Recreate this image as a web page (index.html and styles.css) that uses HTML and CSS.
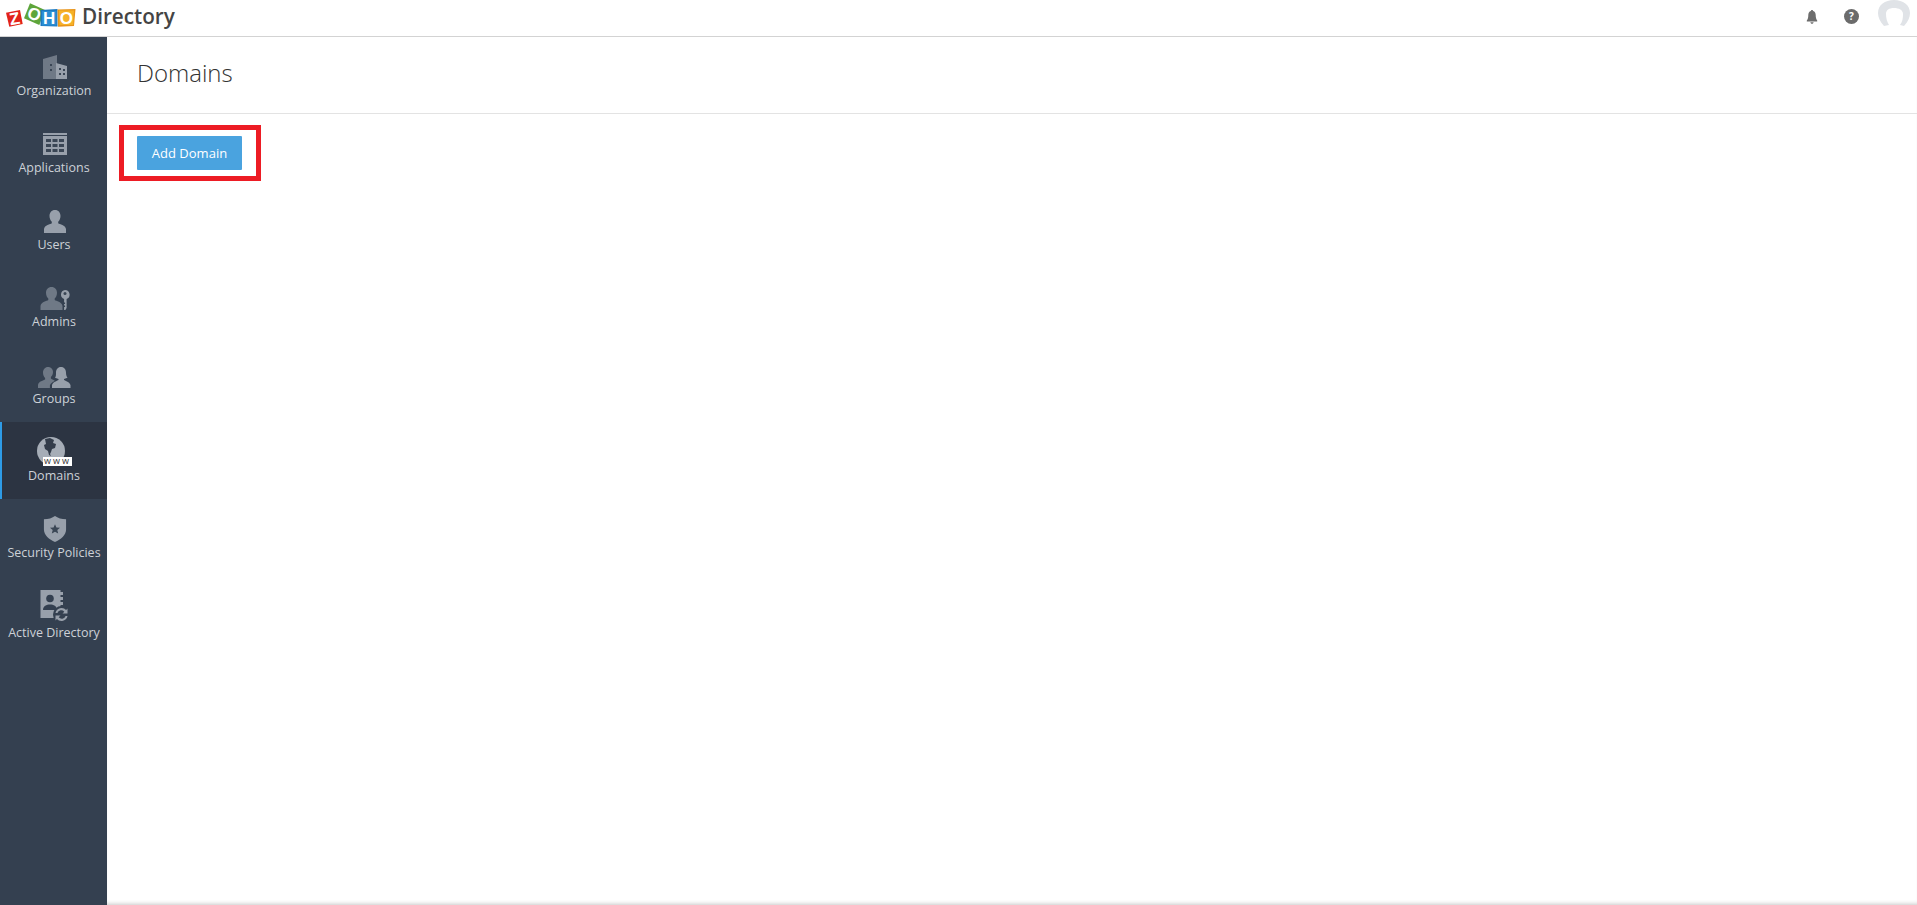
FILE: index.html
```html
<!DOCTYPE html>
<html lang="en">
<head>
<meta charset="utf-8">
<title>Zoho Directory - Domains</title>
<link rel="stylesheet" href="styles.css">
</head>
<body>
<header class="topbar">
  <div class="brand">
    <svg class="zoho-logo" width="78" height="30" viewBox="0 0 78 30">
      <path d="M6 12.700 20 10l2.700 14-13.400 2.700z" fill="#e2231a"/>
      <text x="14.500" y="24.500" class="zl" transform="rotate(-10 14.500 18.500)">Z</text>
      <path d="M24 18.300 30 3.300 45 10 39.300 25z" fill="#5ea53a"/>
      <text x="34.500" y="20" class="zl" transform="rotate(22 34.500 14)">O</text>
      <path d="M40.500 10l17-1v17.500l-17-.5z" fill="#1c79c0"/>
      <path d="M42 11h14.500v14.500H42z" fill="#2a8dd3"/>
      <text x="49.200" y="24" class="zl">H</text>
      <path d="M57.500 9.500 75.500 9 74 26l-16 .7z" fill="#e8941a"/>
      <path d="M59 10.500h15l-.8 14.500H59.500z" fill="#f6b127"/>
      <text x="66.300" y="24" class="zl">O</text>
    </svg>
    <span class="brand-name">Directory</span>
  </div>
  <div class="top-actions">
    <svg class="top-bell" width="14" height="14" viewBox="0 0 14 14"><path d="M7 0c.7 0 1.100.5 1.100 1 1.800.5 2.600 2.200 2.600 4 0 2.600.5 4.300 1.500 5.600v.9H1.800v-.9C2.800 9.300 3.300 7.600 3.300 5c0-1.800.8-3.500 2.600-4C5.900.5 6.300 0 7 0z" fill="#6d6d6d"/><path d="M5.400 12.200h3.200c0 .8-.7 1.600-1.600 1.600s-1.600-.8-1.600-1.600z" fill="#6d6d6d"/></svg>
    <span class="top-help">?</span>
    <svg class="top-avatar" width="32" height="26" viewBox="0 0 32 26"><path d="M6 26C2 22 0 17 0 13 0 5 7 0 16 0s16 5 16 13c0 4-2 9-6 13l-4-1c2.500-3 3-7 3-11 0-4-4-6-9-6s-8 2-8 6c0 4 1 8 3 11z" fill="#e0e3e7"/></svg>
  </div>
</header>
<div class="shell">
  <nav class="sidebar">
    <a class="nav-item">
      <svg class="nav-icon" width="26" height="26" viewBox="0 0 26 26"><path d="M1 5 15 1v24H1z" fill="#6f7986"/><path d="M14 9l11 3v13H14z" fill="#98a0ab"/><path d="M8 10h2v2H8zM8 15h2v2H8zM17 14h2v2h-2zM21 15h2v2h-2zM17 19h2v2h-2zM21 19h2v2h-2z" fill="#3a4655"/></svg>
      <span class="nav-label">Organization</span>
    </a>
    <a class="nav-item">
      <svg class="nav-icon" width="26" height="26" viewBox="0 -1 26 26"><path d="M1 1h24v2H1zM1 4h24v19H1z" fill="#98a0ab"/><path d="M4 7h5v3H4zM10.500 7h5v3h-5zM17 7h5v3h-5zM4 12h5v3H4zM10.500 12h5v3h-5zM17 12h5v3h-5zM4 17h5v3H4zM10.500 17h5v3h-5zM17 17h5v3h-5z" fill="#3a4655"/></svg>
      <span class="nav-label">Applications</span>
    </a>
    <a class="nav-item">
      <svg class="nav-icon" width="26" height="26" viewBox="0 0 26 26"><path d="M13 2c3.500 0 5.500 2.700 5.500 6 0 2.500-1 4.500-2.300 5.700v1.500c1.400 1.100 7.300 1.800 7.800 5.800v4H2v-4c.5-4 6.400-4.700 7.800-5.800v-1.500C8.500 12.500 7.500 10.500 7.500 8c0-3.300 2-6 5.500-6z" fill="#98a0ab"/></svg>
      <span class="nav-label">Users</span>
    </a>
    <a class="nav-item">
      <svg class="nav-icon" width="30" height="26" viewBox="0 0 30 26"><path d="M11.500 2c3.400 0 5.500 2.600 5.500 5.800 0 2.500-1 4.600-2.300 5.700v1.500c1.400 1.100 7.300 1.800 7.800 6V25H.5v-4c.5-4.200 6.400-4.900 7.800-6v-1.500C7 12.400 6 10.300 6 7.800 6 4.600 8.100 2 11.500 2z" fill="#6f7986"/><path d="M25 5a4.600 4.600 0 0 1 1.600 8.900V23l-1.200 2h-1.300v-3h1v-1.500h-1V19h1v-1.500h-1v-3.600A4.600 4.600 0 0 1 25 5z" fill="#98a0ab"/><circle cx="25" cy="8.500" r="1.500" fill="#3a4655"/></svg>
      <span class="nav-label">Admins</span>
    </a>
    <a class="nav-item">
      <svg class="nav-icon" width="33" height="26" viewBox="0 -3 33 26"><path d="M10 2c3 0 5 2.200 5 5 0 2.300-.9 4-2.100 5v1.600c1.300 1 3 1.300 4 2.300-2.500 1-4.500 2.500-5 4.500V23H0v-3c.4-3.800 5.800-4.500 7.100-5.500v-1.600C5.900 12 5 10 5 7.500 5 4.500 7 2 10 2z" fill="#6f7986"/><path d="M23 2c3.300 0 5 2.500 5 5.500 0 2.500.5 4 1.500 5.200l-3.500 1.300v1c1.500 1 5.500 1.700 6.500 5V23H14v-3c1-3.300 5-4 6.500-5v-1l-3.500-1.300c1-1.200 1-2.700 1-5.200C18 4.500 19.700 2 23 2z" fill="#98a0ab"/></svg>
      <span class="nav-label">Groups</span>
    </a>
    <a class="nav-item is-active">
      <span class="globe">
        <svg class="nav-icon" width="28" height="28" viewBox="0 0 28 28"><circle cx="14" cy="14" r="14" fill="#a6adb7"/><path d="M8 2l5-1 4 2-1 3 3 1-1 4-3 1-1 3-1 2 1 2-2-1-1-4-3-2-1-4 2-1z" fill="#333c4a"/></svg>
        <span class="www">www</span>
      </span>
      <span class="nav-label">Domains</span>
    </a>
    <a class="nav-item">
      <svg class="nav-icon" width="24" height="26" viewBox="0 0 24 27"><path d="M12 0c2.800 2 7 3.500 11.500 3.500V14c0 6-5.500 10.500-11.500 13C6 24.500.5 20 .5 14V3.500C5 3.500 9.200 2 12 0z" fill="#98a0ab"/><path d="M12 8.500l1.500 3.400 3.700.3-2.800 2.400.9 3.600-3.300-1.900-3.300 1.900.9-3.600-2.800-2.400 3.700-.3z" fill="#3a4655"/></svg>
      <span class="nav-label">Security Policies</span>
    </a>
    <a class="nav-item item-tall">
      <svg class="nav-icon" width="30" height="32" viewBox="0 0 30 32"><path d="M.5 0h20v2h2.500v3h-2.500v2h2.500v3h-2.500v2h2.500v3h-2.500v13H.5z" fill="#98a0ab"/><circle cx="10" cy="8.500" r="3.800" fill="#333f50"/><path d="M3 20c0-4 3.500-5.500 7-5.500s7 1.500 7 5.500z" fill="#333f50"/><circle cx="21.500" cy="24.500" r="8.500" fill="#344050"/><path d="M15.500 23a6.200 6.200 0 0 1 10.600-3l1.400-1.500v5h-5l1.800-1.800a4 4 0 0 0-6.900 1.300zM27.500 26a6.200 6.200 0 0 1-10.600 3l-1.400 1.500v-5h5l-1.800 1.800a4 4 0 0 0 6.900-1.300z" fill="#98a0ab"/></svg>
      <span class="nav-label">Active Directory</span>
    </a>
  </nav>
  <main class="content">
    <div class="page-head"><h1 class="page-title">Domains</h1></div>
    <div class="page-body">
      <div class="callout"><button class="btn-primary" type="button">Add Domain</button></div>
    </div>
  </main>
</div>
</body>
</html>
```

FILE: styles.css
```css
* { box-sizing: border-box; }
html, body { height: 100%; }
body {
  margin: 0;
  display: flex;
  flex-direction: column;
  height: 905px;
  overflow: hidden;
  background: #fff;
  font-family: "Open Sans", "Liberation Sans", sans-serif;
}
.topbar {
  height: 37px;
  flex: none;
  display: flex;
  justify-content: space-between;
  align-items: flex-start;
  border-bottom: 1px solid #d3d3d3;
  background: #fff;
}
.brand { display: flex; align-items: flex-start; height: 36px; }
.zoho-logo { display: block; flex: none; }
.zl { font: 700 17px "Liberation Sans", sans-serif; fill: #fff; text-anchor: middle; }
.brand-name {
  margin-left: 4px;
  font-family: "Open Sans", sans-serif;
  font-size: 20.7px;
  font-weight: 600;
  line-height: 33px;
  color: #444;
}
.top-actions { display: flex; align-items: flex-start; height: 36px; padding-right: 7px; }
.top-bell { margin-top: 10px; margin-right: 25px; }
.top-help {
  width: 15px;
  height: 15px;
  margin-top: 9px;
  margin-right: 19px;
  border-radius: 50%;
  background: #6b6b6b;
  color: #fff;
  font-size: 10px;
  font-weight: 700;
  line-height: 15px;
  text-align: center;
}
.top-avatar { display: block; }
.shell { flex: 1; display: flex; min-height: 0; }
.sidebar {
  width: 107px;
  flex: none;
  display: flex;
  flex-direction: column;
  background: #344050;
}
.nav-item {
  height: 77px;
  flex: none;
  display: flex;
  flex-direction: column;
  align-items: center;
  padding-top: 17px;
  border-left: 2px solid transparent;
}
.nav-item.is-active { background: #2c3442; border-left-color: #2e9be6; }
.item-tall { height: 82px; padding-top: 14px; }
.nav-icon { display: block; flex: none; }
.nav-label {
  margin-top: 1px;
  margin-left: -1px;
  font-size: 12.5px;
  line-height: 20px;
  color: #ccd1d7;
  white-space: nowrap;
}
.globe { position: relative; display: block; width: 35px; height: 26px; margin-top: -2px; margin-bottom: 2px; }
.www {
  position: absolute;
  left: 6px;
  top: 20px;
  width: 29px;
  height: 9px;
  background: #fff;
  color: #333;
  font-size: 9px;
  line-height: 7px;
  letter-spacing: 2px;
  text-align: center;
}
.content {
  flex: 1;
  display: flex;
  flex-direction: column;
  box-shadow: inset 0 -4px 4px -3px #c8c8c8;
}
.page-head {
  height: 77px;
  flex: none;
  display: flex;
  align-items: center;
  padding: 0 0 6px 30px;
  border-bottom: 1px solid #e3e3e3;
}
.page-title { margin: 0; font-size: 24px; font-weight: 300; color: #333; }
.page-body { padding: 11px 0 0 12px; }
.callout {
  width: 142px;
  height: 56px;
  display: flex;
  align-items: center;
  padding-left: 13px;
  border: 5px solid #ed1c24;
}
.btn-primary {
  width: 105px;
  height: 34px;
  padding: 0;
  border: 0;
  border-radius: 1px;
  background: #4aa3df;
  color: #fff;
  font-family: inherit;
  font-size: 13px;
}
```
